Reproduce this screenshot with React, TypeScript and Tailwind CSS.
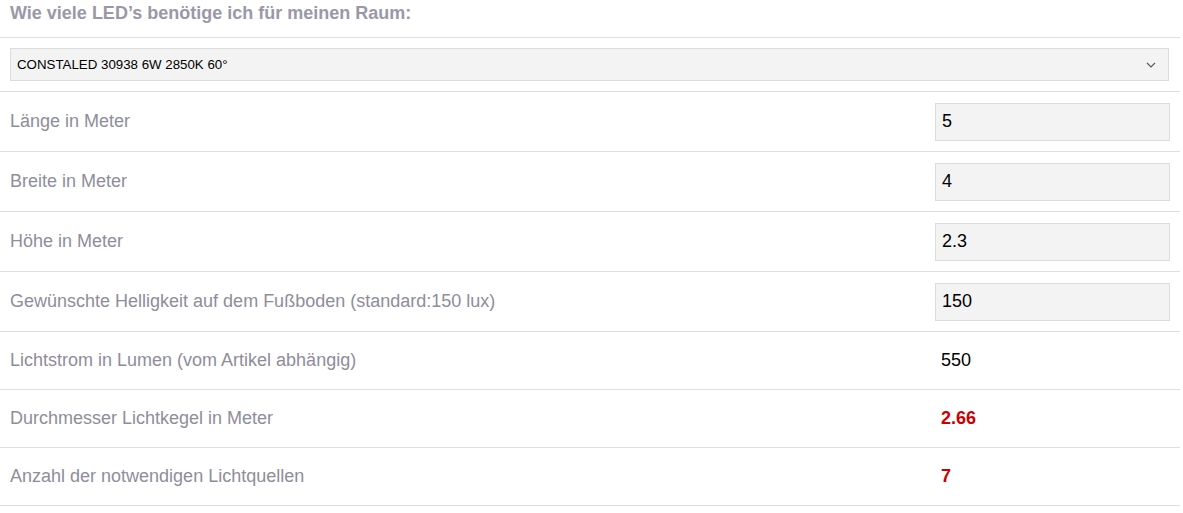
import React from "react";

const inputRows = [
  { label: "Länge in Meter", value: "5" },
  { label: "Breite in Meter", value: "4" },
  { label: "Höhe in Meter", value: "2.3" },
  { label: "Gewünschte Helligkeit auf dem Fußboden (standard:150 lux)", value: "150" },
];

const textRows = [
  { label: "Lichtstrom in Lumen (vom Artikel abhängig)", value: "550", red: false },
  { label: "Durchmesser Lichtkegel in Meter", value: "2.66", red: true },
  { label: "Anzahl der notwendigen Lichtquellen", value: "7", red: true },
];

export default function App() {
  return (
    <div className="w-[1183px] h-[513px] bg-white font-['Liberation_Sans',Arial,sans-serif] overflow-hidden">
      <div className="w-[1180px]">
        <div className="h-[38px] border-b border-[#dddddd] px-[10px] pt-[2px]">
          <span className="text-[18px] font-bold text-[#9a98a8] leading-[22px]">
            Wie viele LED’s benötige ich für meinen Raum:
          </span>
        </div>
        <div className="h-[54px] border-b border-[#dddddd] pl-[10px] pr-[11px] pt-[10px]">
          <div className="h-[33px] bg-[#f3f3f3] border border-[#dcdcdc] flex items-center justify-between pl-[6px] pr-[12px]">
            <span className="text-[13.3px] text-black">CONSTALED 30938 6W 2850K 60°</span>
            <svg width="10" height="6" viewBox="0 0 10 6" fill="none">
              <path d="M1 1l4 4 4-4" stroke="#555" strokeWidth="1.1" />
            </svg>
          </div>
        </div>
        {inputRows.map((r) => (
          <div key={r.label} className="h-[60px] border-b border-[#dddddd] flex items-center">
            <div className="w-[935px] pl-[10px] text-[18px] text-[#8f8d9b]">{r.label}</div>
            <div className="w-[235px] h-[38px] bg-[#f3f3f3] border border-[#dcdcdc] flex items-center pl-[6px] text-[18px] text-black">
              {r.value}
            </div>
          </div>
        ))}
        {textRows.map((r) => (
          <div key={r.label} className="h-[58px] border-b border-[#dddddd] flex items-center">
            <div className="w-[935px] pl-[10px] text-[18px] text-[#8f8d9b]">{r.label}</div>
            <div className={`pl-[6px] text-[18px] ${r.red ? "text-[#cc0000] font-bold" : "text-black"}`}>{r.value}</div>
          </div>
        ))}
      </div>
    </div>
  );
}
